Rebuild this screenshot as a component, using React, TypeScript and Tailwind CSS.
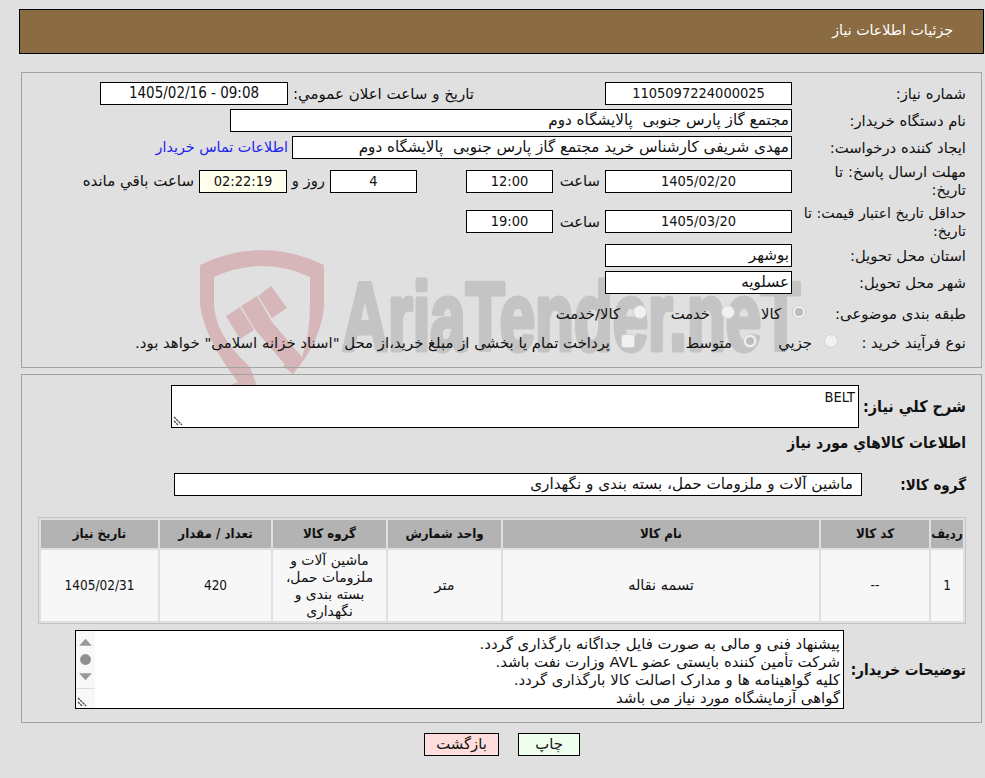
const COND = "font-['DejaVu_Sans_Condensed','DejaVu_Sans',sans-serif]";
const SANS = "font-['DejaVu_Sans',sans-serif]";

function Field({ className = "", num = false, children }: { className?: string; num?: boolean; children?: React.ReactNode }) {
  return (
    <div className={`flex h-[23px] shrink-0 items-center whitespace-pre border border-black bg-white leading-none ${num ? `justify-center text-[14.5px] ${COND}` : `pr-[2px] text-[15.2px] ${SANS}`} ${className}`}>
      {children}
    </div>
  );
}

function Label({ className = "", children }: { className?: string; children: React.ReactNode }) {
  return <div className={`shrink-0 text-[14.8px] leading-[18px] ${SANS} ${className}`}>{children}</div>;
}

function Bold({ className = "", children }: { className?: string; children: React.ReactNode }) {
  return <div className={`shrink-0 whitespace-nowrap font-bold leading-[18px] ${COND} ${className}`}>{children}</div>;
}

function Row({ className = "", children }: { className?: string; children: React.ReactNode }) {
  return <div className={`flex items-center ${className}`}>{children}</div>;
}

function Radio({ checked = false }: { checked?: boolean }) {
  return (
    <span className="-mt-[3px] flex h-[14px] w-[14px] shrink-0 items-center justify-center rounded-full border border-[#d2d2d2] bg-[#f1f1f1]">
      {checked && <span className="h-[8px] w-[8px] rounded-full bg-[#bdbdbd]" />}
    </span>
  );
}

function Grip() {
  return (
    <svg width="10" height="10" viewBox="0 0 10 10" className="absolute bottom-[1px] left-[1px]">
      <path d="M1 1 9 9M1 5 5 9" stroke="#555" strokeWidth="1.4" strokeDasharray="2.500 .7" fill="none" />
    </svg>
  );
}

function Watermark() {
  return (
    <svg className="absolute left-0 top-0 z-0 [direction:ltr]" width="985" height="778" viewBox="0 0 985 778">
      <g fill="#d6b6b9">
        <path d="M200 265Q262 235 324 265L324 305Q322 340 293 374L283 366 302 357Q310 335 310 303L310 277Q262 255 214 277L214 305Q216 335 245 362L250 367 257 386 228 386 238 382Q205 340 200 305Z" />
        <path d="M226 316 240 307 254 330 240 339Z" />
        <path d="M241 306 257 296 272 322 302 357 293 374 258 333 254 328Z" />
        <path d="M258 296 271 286 287 308 272 318Z" />
      </g>
      <text
        x="342"
        y="350"
        direction="ltr"
        textAnchor="start"
        fontFamily="'Liberation Sans', sans-serif"
        fontWeight="700"
        fontSize="96"
        fill="#c4c4c4"
        stroke="#c4c4c4"
        strokeWidth="5"
        strokeLinejoin="round"
        textLength="458"
        lengthAdjust="spacingAndGlyphs"
      >
        AriaTender.neT
      </text>
    </svg>
  );
}

const COLS = [
  ["w-[32px]", "رديف"],
  ["w-[108px]", "کد کالا"],
  ["w-[316px]", "نام کالا"],
  ["w-[113px]", "واحد شمارش"],
  ["w-[113px]", "گروه کالا"],
  ["w-[111px]", "تعداد / مقدار"],
  ["w-[117px]", "تاریخ نیاز"],
];

export default function App() {
  return (
    <div dir="rtl" className={`relative h-[778px] w-[985px] overflow-hidden bg-[#e0e0e0] text-[#111] ${COND}`}>
      <Watermark />
      <div className="relative z-10 flex flex-col pt-[9px]">
        <div className={`ml-[19px] mr-[1px] flex h-[45px] items-center border border-black bg-[#8b6b42] pb-[1px] pr-[30px] text-[14.2px] text-white ${SANS}`}>
          جزئیات اطلاعات نیاز
        </div>

        <section className="ml-[21px] mr-[3px] mt-[18px] flex h-[296px] flex-col gap-1 border border-[#a3a3a3] pr-[15px] pt-[9px]">
          <Row>
            <Label className="w-[174px]">شماره نیاز:</Label>
            <Field num className="w-[187px]">1105097224000025</Field>
            <Label className="mr-[131px] w-[186px] text-[15px]">تاریخ و ساعت اعلان عمومي:</Label>
            <Field num className="w-[188px] !text-[15px]"><span dir="ltr">1405/02/16 - 09:08</span></Field>
          </Row>
          <Row>
            <Label className="w-[174px]">نام دستگاه خریدار:</Label>
            <Field className="w-[562px]">مجتمع گاز پارس جنوبی  پالایشگاه دوم</Field>
          </Row>
          <Row>
            <Label className="w-[174px]">ایجاد کننده درخواست:</Label>
            <Field className="w-[500px]">مهدی شریفی کارشناس خرید مجتمع گاز پارس جنوبی  پالایشگاه دوم</Field>
            <span className={`mr-[4px] text-[14.3px] text-[#2222ee] ${SANS}`}>اطلاعات تماس خریدار</span>
          </Row>
          <Row className="h-9">
            <Label className="w-[174px] whitespace-nowrap">مهلت ارسال پاسخ: تا<br />تاریخ:</Label>
            <Field num className="h-[22px] w-[187px]">1405/02/20</Field>
            <Label className="mr-[5px] w-[47px]">ساعت</Label>
            <Field num className="h-[22px] w-[87px]">12:00</Field>
            <Field num className="mr-[49px] h-[22px] w-[87px]">4</Field>
            <Label className="mr-[5px] w-[38px]">روز و</Label>
            <Field num className="h-[22px] w-[88px] !bg-[#ffffee]">02:22:19</Field>
            <Label className="mr-[5px] text-[15px]">ساعت باقي مانده</Label>
          </Row>
          <Row className="h-[37px]">
            <Label className="w-[174px] whitespace-nowrap !text-[14.2px]">حداقل تاریخ اعتبار قیمت: تا<br />تاریخ:</Label>
            <Field num className="w-[187px]">1405/03/20</Field>
            <Label className="mr-[5px] w-[47px]">ساعت</Label>
            <Field num className="w-[87px]">19:00</Field>
          </Row>
          <Row>
            <Label className="w-[174px]">استان محل تحویل:</Label>
            <Field className="w-[187px]">بوشهر</Field>
          </Row>
          <Row>
            <Label className="w-[174px]">شهر محل تحویل:</Label>
            <Field className="w-[187px]">عسلویه</Field>
          </Row>
          <Row className="mt-[4px] h-[23px]">
            <Label className="w-[160px]">طبقه بندی موضوعی:</Label>
            <Radio checked />
            <Label className="mr-[11px] w-[46px]">کالا</Label>
            <Radio />
            <Label className="mr-[11px] w-[63px]">خدمت</Label>
            <Radio />
            <Label className="mr-[13px]">کالا/خدمت</Label>
          </Row>
          <Row className="mt-[2px] h-[23px]">
            <Label className="w-[128px]">نوع فرآیند خرید :</Label>
            <Radio />
            <Label className="mr-[12px] w-[55px]">جزیي</Label>
            <Radio checked />
            <Label className="mr-[11px] w-[97px]">متوسط</Label>
            <span className="-mt-[3px] h-[14px] w-[14px] shrink-0 rounded-[3px] border border-[#d2d2d2] bg-[#f1f1f1]" />
            <Label className="mr-[11px] text-[14.9px]">پرداخت تمام یا بخشی از مبلغ خرید،از محل "اسناد خزانه اسلامی" خواهد بود.</Label>
          </Row>
        </section>

        <section className="ml-[21px] mr-[3px] mt-[6px] flex h-[349px] flex-col border border-[#a3a3a3] pl-[16px] pr-[15px] pt-[10px]">
          <Row className="h-[43px]">
            <Bold className="w-[107px] text-[16px]">شرح کلي نياز:</Bold>
            <div className="relative h-[43px] w-[688px] border border-black bg-white pr-[3px] pt-[1px] text-right text-[14.5px]">
              BELT
              <Grip />
            </div>
          </Row>
          <Bold className="mt-[4px] flex h-[22px] items-center text-[15.4px]">اطلاعات کالاهاي مورد نياز</Bold>
          <Row className="mt-[19px]">
            <Bold className="w-[104px] text-[15px]">گروه کالا:</Bold>
            <Field className="w-[688px] !pr-[8px]">ماشین آلات و ملزومات حمل، بسته بندی و نگهداری</Field>
          </Row>
          <table className="mt-[21px] w-[928px] table-fixed border-separate border-spacing-[2px] border border-[#c4c4c4] text-center text-[13.5px]">
            <thead>
              <tr>
                {COLS.map(([w, title]) => (
                  <th key={title} className={`${w} h-[28px] whitespace-nowrap bg-[#b3b3b3] p-0 text-[13.2px] font-bold`}>
                    {title}
                  </th>
                ))}
              </tr>
            </thead>
            <tbody>
              <tr className="bg-[#f7f7f7]">
                <td className="h-[71px] p-0">1</td>
                <td className="p-0">--</td>
                <td className={`p-0 text-[14.5px] ${SANS}`}>تسمه نقاله</td>
                <td className={`p-0 text-[14.5px] ${SANS}`}>متر</td>
                <td className={`p-0 px-[5px] text-[13.9px] leading-[17px] ${SANS}`}>ماشین آلات و ملزومات حمل، بسته بندی و نگهداری</td>
                <td className="p-0">420</td>
                <td className="p-0">1405/02/31</td>
              </tr>
            </tbody>
          </table>
          <Row className="mt-[6px]">
            <Bold className="w-[122px] text-[15.2px]">توضیحات خریدار:</Bold>
            <div className="relative flex h-[79px] w-[769px] border border-black bg-white">
              <div className={`flex-1 whitespace-pre pr-[3px] pt-[4px] text-[14.9px] leading-[18px] ${SANS}`}>
                {"پیشنهاد فنی و مالی به صورت فایل جداگانه بارگذاری گردد.\nشرکت تأمین کننده بایستی عضو AVL وزارت نفت باشد.\nکلیه گواهینامه ها و مدارک اصالت کالا بارگذاری گردد.\nگواهی آزمایشگاه مورد نیاز می باشد"}
              </div>
              <div className="relative h-full w-[19px] bg-[#f8f8f8]">
                <svg width="19" height="58" viewBox="0 0 19 58" className="absolute left-0 top-0 border-b border-[#dcdcdc]">
                  <path d="M3 15 9.500 8 16 15Z" fill="#999" />
                  <circle cx="9.500" cy="29" r="5.500" fill="#8f8f8f" />
                  <path d="M3 43 9.500 50 16 43Z" fill="#999" />
                </svg>
                <Grip />
              </div>
            </div>
          </Row>
        </section>

        <div className="mt-[10px] flex justify-center gap-[19px] pl-[19px]">
          <button className={`h-[23px] w-[62px] border border-black bg-[#eeffee] text-[14.8px] leading-none ${SANS}`}>چاپ</button>
          <button className={`h-[23px] w-[75px] border border-black bg-[#ffdddd] text-[14.8px] leading-none ${SANS}`}>بازگشت</button>
        </div>
      </div>
    </div>
  );
}
